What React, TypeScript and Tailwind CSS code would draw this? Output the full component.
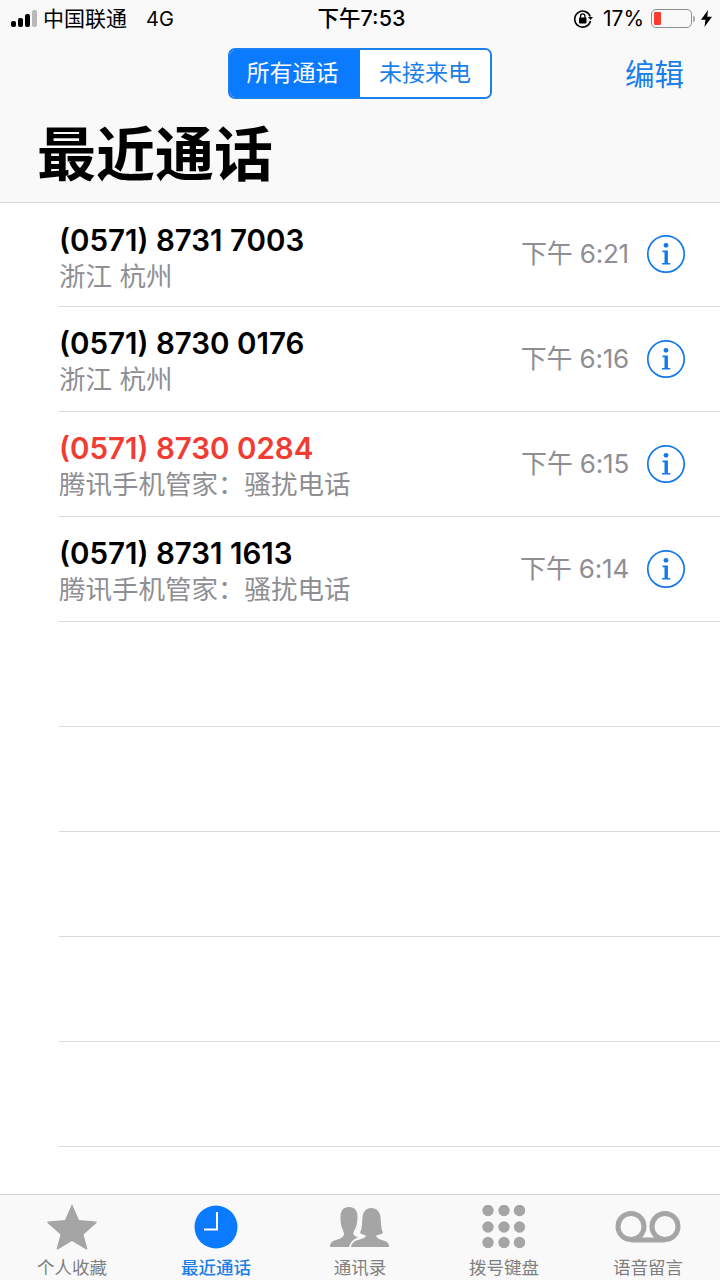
import React from "react";

const cjk = "font-['Inter','Noto_Sans_CJK_SC',sans-serif]";

const calls = [
  { num: "(0571) 8731 7003", sub: "浙江 杭州", time: "下午 6:21", red: false },
  { num: "(0571) 8730 0176", sub: "浙江 杭州", time: "下午 6:16", red: false },
  { num: "(0571) 8730 0284", sub: "腾讯手机管家：骚扰电话", time: "下午 6:15", red: true },
  { num: "(0571) 8731 1613", sub: "腾讯手机管家：骚扰电话", time: "下午 6:14", red: false },
];

function InfoIcon() {
  return (
    <svg width="40" height="40" viewBox="0 0 40 40" fill="none">
      <circle cx="20" cy="20" r="18.200" stroke="#1479e8" strokeWidth="1.700" />
      <circle cx="20" cy="11.300" r="2.400" fill="#1479e8" />
      <path d="M16.500 16.600h5.400v12.400h2.300v1.600h-8.200V29h2.500V18.200h-2z" fill="#1479e8" />
    </svg>
  );
}

function Tab({ label, active, children }: { label: string; active?: boolean; children: React.ReactNode }) {
  return (
    <div className="flex w-[144px] flex-col items-center">
      <div className="flex h-[50px] items-center justify-center">{children}</div>
      <div
        className={`mt-[4px] text-[17.500px] leading-[24px] ${active ? "font-medium text-[#1a7fe8]" : "text-[#7f7f7f]"}`}
      >
        {label}
      </div>
    </div>
  );
}

export default function App() {
  return (
    <div className={`flex h-[1280px] w-[720px] flex-col overflow-hidden bg-white ${cjk}`}>
      <header className="h-[203px] shrink-0 border-b border-[#d9d9d9] bg-[#f9f9f9]">
        <div className="grid h-[37px] grid-cols-[1fr_auto_1fr] items-center pl-[11px] pr-[8px] text-black">
          <div className="flex items-center">
            <div className="flex items-end gap-[2px]">
              <span className="h-[6px] w-[5px] rounded-[2px] bg-black" />
              <span className="h-[9px] w-[5px] rounded-[2px] bg-black" />
              <span className="h-[13px] w-[5px] rounded-[2px] bg-black" />
              <span className="h-[17px] w-[5px] rounded-[2px] bg-[#b9b9b9]" />
            </div>
            <span className="ml-[6px] text-[21px] leading-none">中国联通</span>
            <span className="ml-[19px] text-[20px] leading-none">4G</span>
          </div>
          <div className="text-[21.500px] font-medium leading-none">下午7:53</div>
          <div className="flex items-center justify-end">
            <svg width="20" height="20" viewBox="0 0 20 20" fill="none">
              <path d="M17.300 7.500A8 8 0 1 0 17.500 12" stroke="#000" strokeWidth="1.600" />
              <path d="M15 8h5l-2.500 3z" fill="#000" />
              <rect x="6" y="8.500" width="7.500" height="6" rx="1" fill="#000" />
              <path d="M7.500 9V7.200a2.200 2.200 0 0 1 4.500 0V9" stroke="#000" strokeWidth="1.300" />
            </svg>
            <span className="ml-[10px] text-[21px] leading-none">17%</span>
            <div className="ml-[7px] flex items-center">
              <div className="flex h-[19px] w-[41px] items-center rounded-[5px] border border-[#8e8e8e] px-[2px]">
                <span className="h-[13px] w-[7px] rounded-[1px] bg-[#ff3b30]" />
              </div>
              <span className="ml-[1px] h-[6px] w-[2px] rounded-r-[2px] bg-[#a8a8a8]" />
            </div>
            <svg className="ml-[6px]" width="11" height="17" viewBox="0 0 11 17">
              <path d="M7 0 0 9.800h4.400L3.500 17 11 6.800H6.300z" fill="#000" />
            </svg>
          </div>
        </div>

        <div className="relative mt-[11px] flex h-[51px] justify-center">
          <div className="flex h-[51px] w-[264px] overflow-hidden rounded-[7px] border-2 border-[#1a80f0] text-[23px] leading-none">
            <div className="flex w-[130px] items-center justify-center bg-[#0a7aff] pr-[5px] text-white">所有通话</div>
            <div className="flex flex-1 items-center justify-center bg-white text-[#1a7fe8]">未接来电</div>
          </div>
          <span className="absolute right-[36px] top-[8px] text-[29.500px] leading-[36px] text-[#1a7fe8]">编辑</span>
        </div>

        <h1 className="mt-[21px] pl-[37px] text-[59px] font-bold leading-[70px] text-black">最近通话</h1>
      </header>

      <main className="flex-1 pl-[59px]">
        {calls.map((c, i) => (
          <div
            key={c.num}
            className={`flex items-center border-b border-[#dcdcdc] ${i === 0 ? "h-[104px]" : "h-[105px]"}`}
          >
            <div className={`flex-1 ${i === 0 ? "pt-[6px]" : "pt-[4px]"}`}>
              <div
                className={`text-[29.500px] font-semibold leading-[36px] ${c.red ? "text-[#f13c33]" : "text-black"}`}
              >
                {c.num}
              </div>
              <div className="text-[26.500px] leading-[36px] text-[#8e8e93]">{c.sub}</div>
            </div>
            <div className={`flex items-center ${i === 0 ? "mb-[2px]" : ""}`}>
              <div className="text-[26px] leading-none tracking-[-0.2px] text-[#8e8e93]">{c.time}</div>
              <div className="ml-[17px] mr-[34px]">
                <InfoIcon />
              </div>
            </div>
          </div>
        ))}
        {[0, 1, 2, 3, 4].map((i) => (
          <div key={i} className="h-[105px] border-b border-[#dcdcdc]" />
        ))}
      </main>

      <nav className="flex h-[86px] shrink-0 justify-between border-t border-[#cfcfcf] bg-[#f9f9f9] pt-[7px]">
        <Tab label="个人收藏">
          <svg width="50" height="46" viewBox="0 0 50 46">
            <path
              d="M25 0l7 16 17 1.600c.8.100 1 .8.400 1.300L36.500 30.500 40.300 44.500c.2.800-.4 1.300-1.100.9L25 37 10.800 45.400c-.7.400-1.300-.1-1.100-.9L13.500 30.500.6 18.900c-.6-.5-.4-1.200.4-1.300L18 16z"
              fill="#a5a5a5"
            />
          </svg>
        </Tab>
        <Tab label="最近通话" active>
          <svg width="44" height="44" viewBox="0 0 44 44">
            <circle cx="22" cy="22" r="21.500" fill="#0a7aff" />
            <path d="M23 7v17.500H10" stroke="#fff" strokeWidth="2" fill="none" />
          </svg>
        </Tab>
        <Tab label="通讯录">
          <svg width="60" height="42" viewBox="0 0 60 42" fill="#a5a5a5">
            <path d="M19 1C25 1 27.500 5 27.500 11C27.500 17 26 22 24 25C23 27 23 29 25 30L28 31.500C23 33 20 37 19 41L0 41C0 37 2 35 6 34C10 33 14 31 14 28C14 26 13 25 12.500 23C11 20 10.500 15 10.500 11C10.500 5 13 1 19 1Z" />
            <path d="M41 2C47 2 50 6 50.500 11C51 17 51 23 53 27C51 28.500 48 29 46.500 29L46.500 31C48 33 52 34 55 35C58 36 59 38 59 41L21 41C22 37 24 35 28 34C31 33 34 32 35.500 31L35.500 29C34 29 32 28.500 30 27C32 23 32 17 32.500 11C33 6 36 2 41 2Z" />
          </svg>
        </Tab>
        <Tab label="拨号键盘">
          <svg width="44" height="44" viewBox="0 0 44 44" fill="#a5a5a5">
            {[5.500, 22, 37.500].flatMap((y) =>
              [6, 22, 37.500].map((x) => <circle key={`${x}-${y}`} cx={x} cy={y} r="5.700" />),
            )}
          </svg>
        </Tab>
        <Tab label="语音留言">
          <svg width="66" height="32" viewBox="0 0 66 32" fill="none">
            <circle cx="16" cy="15.500" r="13" stroke="#a5a5a5" strokeWidth="5" />
            <circle cx="50" cy="15.500" r="13" stroke="#a5a5a5" strokeWidth="5" />
            <path d="M16 29h34" stroke="#a5a5a5" strokeWidth="5" />
          </svg>
        </Tab>
      </nav>
    </div>
  );
}
